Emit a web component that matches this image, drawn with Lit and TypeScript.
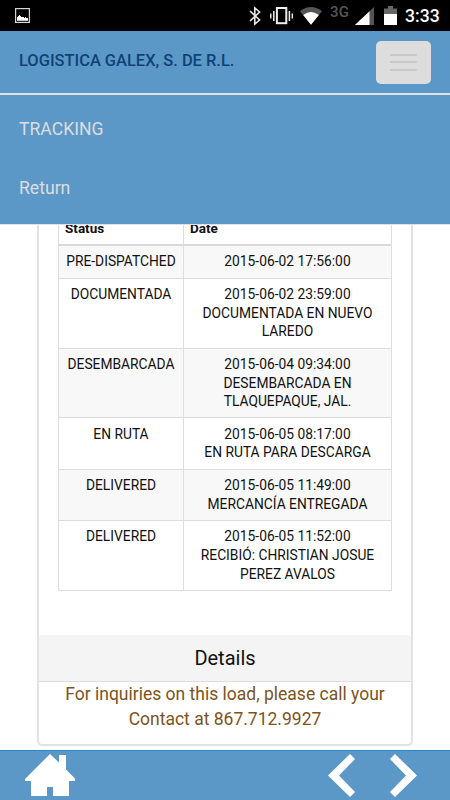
import { LitElement, html, css } from "lit";
import { customElement } from "lit/decorators.js";

interface Entry {
  status: string;
  lines: string[];
}

const entries: Entry[] = [
  { status: "PRE-DISPATCHED", lines: ["2015-06-02 17:56:00"] },
  { status: "DOCUMENTADA", lines: ["2015-06-02 23:59:00", "DOCUMENTADA EN NUEVO", "LAREDO"] },
  { status: "DESEMBARCADA", lines: ["2015-06-04 09:34:00", "DESEMBARCADA EN", "TLAQUEPAQUE, JAL."] },
  { status: "EN RUTA", lines: ["2015-06-05 08:17:00", "EN RUTA PARA DESCARGA"] },
  { status: "DELIVERED", lines: ["2015-06-05 11:49:00", "MERCANCÍA ENTREGADA"] },
  { status: "DELIVERED", lines: ["2015-06-05 11:52:00", "RECIBIÓ: CHRISTIAN JOSUE", "PEREZ AVALOS"] },
];

@customElement("status-bar")
class StatusBar extends LitElement {
  static styles = css`
    :host { display: flex; height: 31px; background: #000; color: #fff; box-sizing: border-box; padding: 0 10px 0 15px; }
    svg { display: block; flex: none; }
    .picture { margin-top: 8px; margin-right: auto; }
    .bluetooth { margin: 6px 9px 0 0; }
    .vibrate { margin: 7px 7px 0 0; }
    .wifi { margin: 7px 8px 0 0; }
    .net { font: 500 15px/16px Roboto, sans-serif; color: #555; width: 21px; margin: 4px 4px 0 0; letter-spacing: 0.2px; }
    .signal { margin: 7px 10px 0 0; }
    .battery { margin: 6px 8px 0 0; }
    .clock { font: 500 17.6px/20px Roboto, sans-serif; width: 35px; margin-top: 6px; white-space: nowrap; }
  `;
  render() {
    return html`
      <svg class="picture" width="15" height="15"><rect x=".6" y=".6" width="13.8" height="13.8" fill="#000" stroke="#d4d4d4" stroke-width="1.2"/><path d="M2 9h1V8h1V7h1v1h1v1h3v1h1V9h1v1h2v2.8H2z" fill="#fff"/></svg>
      <svg class="bluetooth" width="12" height="20" fill="none" stroke="#e8e8e8" stroke-width="1.6"><path d="M1 5l9.6 9-4.8 4V2l4.8 4L1 15"/></svg>
      <svg class="vibrate" width="23" height="18" fill="none" stroke="#eee"><rect x="6.9" y="1" width="9.4" height="15.2" stroke-width="2"/><path d="M3.8 4v10M19.4 4v10" stroke-width="1.5"/><path d="M.8 6.5v5M22.3 6.5v5" stroke-width="1.4"/></svg>
      <svg class="wifi" width="22" height="18"><path d="M0 4.2Q11-4.2 22 4.2L11 17.8z" fill="#555"/><path d="M3.2 8.1Q11 1.7 18.8 8.1L11 17.8z" fill="#fff"/></svg>
      <span class="net">3G</span>
      <svg class="signal" width="19" height="18"><path d="M19 0v18H0z" fill="#555"/><path d="M14.5 4.3V18H0z" fill="#fff"/></svg>
      <svg class="battery" width="13" height="19"><path d="M0 2.5h4V0h5v2.5h4V9H0z" fill="#666"/><path d="M0 8h13v11H0z" fill="#fff"/></svg>
      <span class="clock">3:33</span>
    `;
  }
}

@customElement("nav-panel")
class NavPanel extends LitElement {
  static styles = css`
    :host { display: block; height: 193px; background: #5b98c8; border-bottom: 1px solid #dfe3e7; font-family: Roboto, sans-serif; }
    .head { display: flex; justify-content: space-between; height: 64px; padding: 10px 19px 0; box-sizing: border-box; border-bottom: 2px solid #dfe3e6; }
    .brand { font-size: 16.45px; font-weight: 500; line-height: 40px; color: #0f4376; white-space: nowrap; }
    .toggle { display: flex; flex-direction: column; gap: 5.6px; width: 55px; height: 43px; padding: 12.5px 14px; box-sizing: border-box; border: 0; border-radius: 5px; background: #ddd; }
    .bar { height: 2px; border-radius: 1px; background: #c8c8c8; }
    .links { padding: 5px 19px 0; font-size: 17.6px; line-height: 59px; color: #ddd; }
  `;
  render() {
    return html`
      <div class="head">
        <span class="brand">LOGISTICA GALEX, S. DE R.L.</span>
        <button class="toggle"><span class="bar"></span><span class="bar"></span><span class="bar"></span></button>
      </div>
      <div class="links"><div class="link">TRACKING</div><div class="link">Return</div></div>
    `;
  }
}

@customElement("app-root")
class AppRoot extends LitElement {
  static styles = css`
    :host { display: flex; flex-direction: column; width: 450px; height: 800px; overflow: hidden; background: #fff; font-family: Roboto, sans-serif; color: #111; }
    .content { height: 525px; overflow: hidden; padding: 0 37px; }
    .card { height: 521px; width: 376px; box-sizing: border-box; border: 2px solid #e2e2e2; border-width: 0 2px 2px; border-radius: 0 0 5px 5px; display: flex; flex-direction: column; }
    .table { margin: 0 0 44px 19px; width: 334px; box-sizing: border-box; border: 1px solid #ddd; border-width: 0 1px 0 1px; font-size: 13.8px; line-height: 18.65px; }
    .row { display: grid; grid-template-columns: 124px 1fr; border-bottom: 1px solid #dcdcdc; }
    .row:nth-child(even) { background: #f8f8f8; }
    .cell { padding: 6.4px 0 6.55px; text-align: center; white-space: nowrap; }
    .cell + .cell { border-left: 1px solid #ddd; }
    .titles { height: 19px; border-bottom: 2px solid #d9d9d9; font-weight: 700; font-size: 13.5px; }
    .titles .cell { padding: 0 6px; text-align: left; margin-top: -6px; }
    .details { height: 46px; box-sizing: content-box; border-bottom: 1px solid #ddd; background: #f4f4f4; border-radius: 4px 4px 0 0; text-align: center; font-size: 20px; line-height: 46px; }
    .note { color: #7c541c; font-size: 17.5px; line-height: 25px; text-align: center; white-space: nowrap; }
    .footer { display: flex; height: 50px; box-sizing: border-box; border-top: 1px solid #218bc9; background: #5b98c8; padding: 3px 33px 0 25px; }
    .home { margin-right: auto; }
    .next { margin-left: 35px; }
  `;
  render() {
    return html`
      <status-bar></status-bar>
      <nav-panel></nav-panel>
      <div class="content">
        <div class="card">
          <div class="table">
            <div class="row titles"><div class="cell">Status</div><div class="cell">Date</div></div>
            ${entries.map((e) => html`<div class="row"><div class="cell">${e.status}</div><div class="cell">${e.lines.map((l) => html`<div>${l}</div>`)}</div></div>`)}
          </div>
          <div class="details">Details</div>
          <div class="note"><div>For inquiries on this load, please call your</div><div>Contact at 867.712.9927</div></div>
        </div>
      </div>
      <div class="footer">
        <svg class="home" width="50" height="43" fill="#fff"><path d="M25 0l9 8.5V1h7v14.5l9 9V27h-6v15H28v-9h-6v9H6V27H0v-2z"/></svg>
        <svg width="27" height="43" fill="#fff"><path d="M22 0l5 5L11 21.5 27 38l-5 5L0 21.5z"/></svg>
        <svg class="next" width="27" height="43" fill="#fff"><path d="M5 0L0 5l16 16.5L0 38l5 5 22-21.5z"/></svg>
      </div>
    `;
  }
}
